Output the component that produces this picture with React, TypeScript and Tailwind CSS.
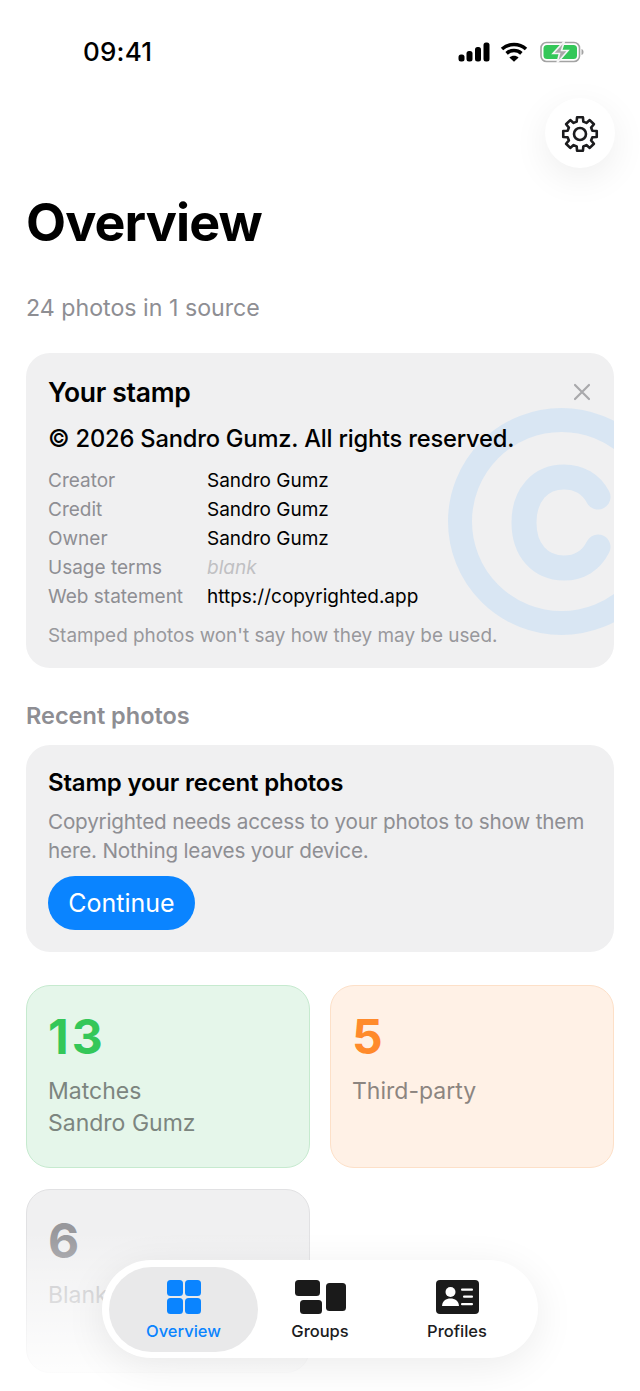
function Signal() {
  return (
    <svg className="-mr-[2px]" width="32" height="20" viewBox="0 0 32 20" fill="#000">
      <rect x="0.5" y="12.5" width="6" height="7" rx="2.5" />
      <rect x="8.5" y="9" width="6" height="10.5" rx="2.5" />
      <rect x="17" y="5" width="6" height="14.5" rx="2.5" />
      <rect x="25.5" y="0.5" width="6" height="19" rx="2.5" />
    </svg>
  );
}

function Wifi() {
  return (
    <svg width="28" height="20" viewBox="0 0 28 20" fill="none" stroke="#000" strokeWidth="3.6">
      <path d="M2 7 C8.8 1 19.2 1 26 7" />
      <path d="M6.6 11.4 C10.8 7.6 17.2 7.6 21.4 11.4" />
      <path d="M14 19.8 L9.4 15.4 C12 13.2 16 13.2 18.6 15.4 Z" fill="#000" stroke="none" />
    </svg>
  );
}

function Battery() {
  return (
    <svg width="44" height="22" viewBox="0 0 44 22" fill="none">
      <rect x="1" y="1.5" width="38.5" height="19" rx="5.5" stroke="#a3a3a3" strokeWidth="1.6" />
      <rect x="3.5" y="4" width="33.5" height="14" rx="3.5" fill="#34c759" />
      <path d="M41.5 8 C43 8.5 43.5 9.5 43.5 11 C43.5 12.5 43 13.5 41.5 14 Z" fill="#a3a3a3" />
      <path d="M24.5 0 L13 12.5 H19.5 L17 22 L28 9.5 H21.5 Z" fill="#a8a8a8" stroke="#f5f5f5" strokeWidth="1.6" />
    </svg>
  );
}

function gearPath() {
  const cx = 20;
  const cy = 20;
  const ro = 17;
  const ri = 12.8;
  const pt = (r: number, deg: number) => {
    const a = (deg * Math.PI) / 180;
    return `${(cx + r * Math.cos(a)).toFixed(2)} ${(cy + r * Math.sin(a)).toFixed(2)}`;
  };
  let d = "";
  for (let i = 0; i < 8; i++) {
    const a = -90 + i * 45;
    d += `${i === 0 ? "M" : "L"}${pt(ro, a - 10)} L${pt(ro, a + 10)} L${pt(ri, a + 15)} L${pt(ri, a + 30)} `;
  }
  return d + "Z";
}

function Gear() {
  return (
    <svg className="translate-y-[1px]" width="40" height="40" viewBox="0 0 40 40" fill="none" stroke="#1c1c1e" strokeWidth="2.6" strokeLinejoin="round">
      <path d={gearPath()} />
      <circle cx="20" cy="20" r="6" />
    </svg>
  );
}

function Watermark() {
  return (
    <svg className="absolute left-[422px] top-[55px]" width="166" height="228" viewBox="0 0 166 228" fill="none" stroke="#d9e6f3">
      <circle cx="113.5" cy="113.5" r="101.5" strokeWidth="24" />
      <path d="M150 89 C143 76 131 69 116 69 C92 69 76 87 76 114.5 C76 142 92 160 116 160 C131 160 143 153 150 139" strokeWidth="25" strokeLinecap="round" />
    </svg>
  );
}

function GridIcon() {
  return (
    <svg width="34" height="34" viewBox="0 0 34 34" fill="#0a84ff">
      <rect x="0" y="0" width="16" height="16" rx="3.5" />
      <rect x="18" y="0" width="16" height="16" rx="3.5" />
      <rect x="0" y="18" width="16" height="16" rx="3.5" />
      <rect x="18" y="18" width="16" height="16" rx="3.5" />
    </svg>
  );
}

function GroupsIcon() {
  return (
    <svg width="51" height="34" viewBox="0 0 51 34" fill="#1a1a1a">
      <rect x="0" y="0" width="25" height="16" rx="3.5" />
      <rect x="5" y="20" width="22" height="14" rx="3.5" />
      <rect x="31" y="3" width="20" height="28" rx="3.5" />
    </svg>
  );
}

function ProfilesIcon() {
  return (
    <svg width="43" height="34" viewBox="0 0 43 34">
      <rect x="0" y="0" width="43" height="34" rx="4" fill="#1a1a1a" />
      <circle cx="14.5" cy="12" r="5" fill="#fff" />
      <path d="M6 26 C6.5 20.5 10 18.6 14.5 18.6 C19 18.6 22.5 20.5 23 26 Z" fill="#fff" />
      <rect x="25" y="8.5" width="12" height="2.2" rx="1" fill="#fff" />
      <rect x="27" y="15.5" width="10" height="2.2" rx="1" fill="#fff" />
      <rect x="25" y="23" width="12" height="2.2" rx="1" fill="#fff" />
    </svg>
  );
}

const rows: [string, string][] = [
  ["Creator", "Sandro Gumz"],
  ["Credit", "Sandro Gumz"],
  ["Owner", "Sandro Gumz"],
  ["Usage terms", "blank"],
  ["Web statement", "https://copyrighted.app"],
];

export default function App() {
  return (
    <div className="relative h-[1391px] w-[640px] overflow-hidden bg-white font-['Inter',sans-serif] text-black">
      <div className="flex h-[104px] items-start justify-between pl-[83px] pr-[56px] pt-[34px]">
        <span className="text-[26px] font-medium leading-[36px] tracking-[0.2px]">09:41</span>
        <div className="flex items-center gap-[12px] pt-[7px]">
          <Signal />
          <Wifi />
          <Battery />
        </div>
      </div>

      <div className="px-[26px]">
        <div className="flex justify-end">
          <button className="-mt-[6px] -mr-[1px] flex h-[70px] w-[70px] items-center justify-center rounded-full bg-white shadow-[0_10px_36px_rgba(0,0,0,0.07)]">
            <Gear />
          </button>
        </div>

        <h1 className="mt-[19px] text-[52px] font-bold leading-[72px] tracking-[-0.9px]">Overview</h1>
        <p className="mt-[33px] text-[23.2px] leading-[32px] text-[#8e8e93]">24 photos in 1 source</p>

        <section className="relative mt-[29px] h-[315px] overflow-hidden rounded-[24px] bg-[#f0f0f1] px-[22px] pt-[22px]">
          <Watermark />
          <div className="relative">
            <div className="flex items-center justify-between">
              <h2 className="text-[26.5px] font-semibold leading-[34px] tracking-[-0.3px]">Your stamp</h2>
              <svg className="mr-[1px]" width="18" height="18" viewBox="0 0 18 18" stroke="#a9a9ac" strokeWidth="2.2" strokeLinecap="round">
                <path d="M2 2 L16 16 M16 2 L2 16" />
              </svg>
            </div>
            <p className="mt-[13px] whitespace-nowrap text-[23.7px] font-medium leading-[34px] tracking-[-0.2px]">© 2026 Sandro Gumz. All rights reserved.</p>
            <div className="mt-[10px] flex flex-col">
              {rows.map(([k, v]) => (
                <div key={k} className="flex text-[19px] leading-[29px]">
                  <span className="w-[159px] text-[#8e8e93]">{k}</span>
                  {v === "blank" ? (
                    <span className="italic text-[#c0c0c3]">{v}</span>
                  ) : (
                    <span>{v}</span>
                  )}
                </div>
              ))}
            </div>
            <p className="mt-[10px] text-[18.9px] leading-[29px] text-[#98989c]">Stamped photos won't say how they may be used.</p>
          </div>
        </section>

        <h3 className="mt-[32px] text-[23.5px] font-semibold leading-[32px] text-[#8e8e93]">Recent photos</h3>

        <section className="mt-[13px] h-[207px] rounded-[24px] bg-[#f0f0f1] px-[22px] pt-[22px]">
          <h4 className="text-[24px] font-semibold leading-[32px] tracking-[-0.2px]">Stamp your recent photos</h4>
          <p className="mt-[8px] text-[20.7px] leading-[29px] tracking-[-0.2px] text-[#8e8e93]">
            Copyrighted needs access to your photos to show them here. Nothing leaves your device.
          </p>
          <button className="mt-[11px] h-[54px] w-[147px] rounded-full bg-[#0a84ff] text-[25px] leading-[54px] text-white">Continue</button>
        </section>

        <div className="mt-[33px] grid grid-cols-2 gap-x-[20px] gap-y-[21px]">
          <div className="h-[183px] rounded-[24px] border-[1.5px] border-[#c6eacf] bg-[#e5f6ea] px-[21px] pt-[22px]">
            <div className="text-[48px] font-bold leading-[58px] tracking-[3px] text-[#34c759]">13</div>
            <div className="mt-[9px] text-[23px] leading-[32px] text-[#7c857f]">Matches</div>
            <div className="text-[23px] leading-[32px] text-[#7c857f]">Sandro Gumz</div>
          </div>
          <div className="h-[183px] rounded-[24px] border-[1.5px] border-[#fde0c8] bg-[#fff1e6] px-[21px] pt-[22px]">
            <div className="text-[48px] font-bold leading-[58px] text-[#ff8a2b]">5</div>
            <div className="mt-[9px] text-[23px] leading-[32px] text-[#8c8580]">Third-party</div>
          </div>
          <div className="h-[184px] rounded-[24px] border-[1.5px] border-[#e1e1e3] bg-[#f0f0f1] px-[21px] pt-[22px]">
            <div className="text-[48px] font-bold leading-[58px] text-[#98989c]">6</div>
            <div className="mt-[9px] text-[23px] leading-[32px] text-[#c0c0c3]">Blank</div>
          </div>
        </div>
      </div>

      <div className="absolute inset-x-0 bottom-0 h-[160px] bg-gradient-to-b from-white/0 to-white" />

      <nav className="absolute left-[102px] top-[1260px] flex h-[98px] w-[436px] items-center rounded-full bg-white pl-[7px] shadow-[0_8px_40px_rgba(0,0,0,0.08)]">
        <div className="flex h-[85px] w-[149px] flex-col items-center rounded-full bg-[#e9e9ea] pt-[13px]">
          <GridIcon />
          <span className="mt-[6px] text-[16.5px] font-medium leading-[22px] text-[#0a84ff]">Overview</span>
        </div>
        <div className="flex h-[85px] w-[124px] flex-col items-center pt-[13px]">
          <GroupsIcon />
          <span className="mt-[6px] text-[16.5px] font-medium leading-[22px] text-[#1c1c1e]">Groups</span>
        </div>
        <div className="flex h-[85px] w-[150px] flex-col items-center pt-[13px]">
          <ProfilesIcon />
          <span className="mt-[6px] text-[16.5px] font-medium leading-[22px] text-[#1c1c1e]">Profiles</span>
        </div>
      </nav>
    </div>
  );
}
